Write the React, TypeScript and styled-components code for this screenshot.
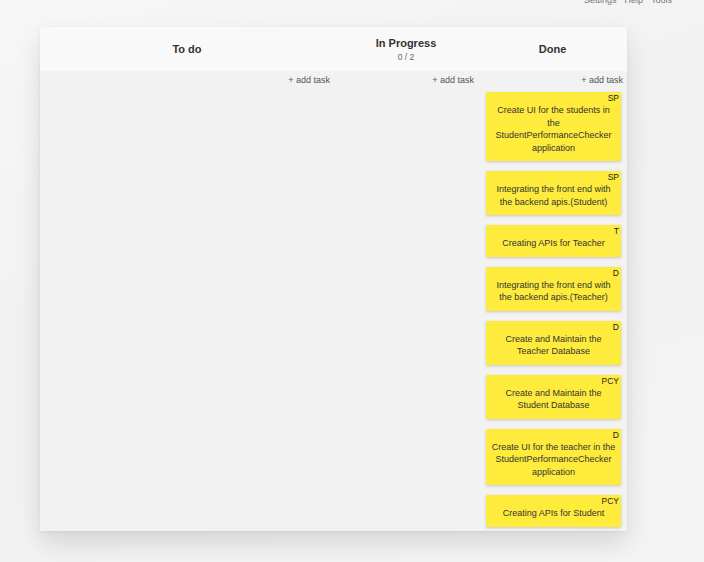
import styled, { createGlobalStyle } from "styled-components";

interface Task {
  id: number;
  owner: string;
  title: string;
}

interface Column {
  name: string;
  count?: string;
  tasks: Task[];
}

const GlobalStyle = createGlobalStyle`
  html, body {
    margin: 0;
    padding: 0;
    background: #f3f3f3;
    font-family: "Liberation Sans", Arial, sans-serif;
  }
`;

const Page = styled.div`
  width: 704px;
  height: 562px;
  overflow: hidden;
  background: linear-gradient(160deg, #f7f7f7 0%, #f1f1f1 45%, #f4f4f4 100%);
`;

const TopNav = styled.div`
  height: 5px;
  display: flex;
  justify-content: flex-end;
  align-items: flex-end;
  gap: 8px;
  padding-right: 32px;
  overflow: hidden;
  font-size: 9px;
  line-height: 10px;
  color: #777;
`;

const Board = styled.div`
  width: 587px;
  margin: 22px 0 0 40px;
  background: #f2f2f2;
  box-shadow: 0 12px 24px rgba(0, 0, 0, 0.12), 0 1px 3px rgba(0, 0, 0, 0.06);
`;

const Grid = styled.div`
  display: grid;
  grid-template-columns: 294px 144px 149px;
`;

const Header = styled(Grid)`
  height: 44px;
  background: #f9f9f9;
`;

const HeaderCell = styled.div`
  display: flex;
  flex-direction: column;
  align-items: center;
  justify-content: center;
  color: #333;
`;

const ColumnTitle = styled.div`
  font-size: 11px;
  font-weight: bold;
  line-height: 13px;
  margin-top: 1px;
`;

const ColumnCount = styled.div`
  font-size: 8.5px;
  color: #666;
  line-height: 12px;
  margin-top: 1px;
`;

const Body = styled(Grid)`
  padding-bottom: 4px;
`;

const Lane = styled.div`
  display: flex;
  flex-direction: column;
`;

const AddTask = styled.div`
  text-align: right;
  font-size: 9px;
  line-height: 14px;
  color: #555;
  padding-right: 4px;
  margin: 2px 0 5px;
`;

const Card = styled.div`
  margin: 0 6px 10px 8px;
  padding: 1px 2px 7px;
  background: #ffeb3b;
  box-shadow: 0 1px 3px rgba(0, 0, 0, 0.18);
  border-radius: 1px;

  &:last-child {
    margin-bottom: 0;
  }
`;

const Owner = styled.div`
  text-align: right;
  font-size: 8.5px;
  line-height: 10px;
  color: #222;
`;

const CardTitle = styled.div`
  text-align: center;
  font-size: 9px;
  line-height: 12.5px;
  color: #333;
  padding: 1px 3px 0;
`;

const columns: Column[] = [
  { name: "To do", tasks: [] },
  { name: "In Progress", count: "0 / 2", tasks: [] },
  {
    name: "Done",
    tasks: [
      { id: 1, owner: "SP", title: "Create UI for the students in the StudentPerformanceChecker application" },
      { id: 2, owner: "SP", title: "Integrating the front end with the backend apis.(Student)" },
      { id: 3, owner: "T", title: "Creating APIs for Teacher" },
      { id: 4, owner: "D", title: "Integrating the front end with the backend apis.(Teacher)" },
      { id: 5, owner: "D", title: "Create and Maintain the Teacher Database" },
      { id: 6, owner: "PCY", title: "Create and Maintain the Student Database" },
      { id: 7, owner: "D", title: "Create UI for the teacher in the StudentPerformanceChecker application" },
      { id: 8, owner: "PCY", title: "Creating APIs for Student" },
    ],
  },
];

const App: React.FC = () => {
  return (
    <Page>
      <GlobalStyle />
      <TopNav>
        <span>Settings</span>
        <span>Help</span>
        <span>Tools</span>
      </TopNav>
      <Board>
        <Header>
          {columns.map(col => (
            <HeaderCell key={col.name}>
              <ColumnTitle>{col.name}</ColumnTitle>
              {col.count && <ColumnCount>{col.count}</ColumnCount>}
            </HeaderCell>
          ))}
        </Header>
        <Body>
          {columns.map(col => (
            <Lane key={col.name}>
              <AddTask>+ add task</AddTask>
              {col.tasks.map(task => (
                <Card key={task.id}>
                  <Owner>{task.owner}</Owner>
                  <CardTitle>{task.title}</CardTitle>
                </Card>
              ))}
            </Lane>
          ))}
        </Body>
      </Board>
    </Page>
  );
};

export default App;
